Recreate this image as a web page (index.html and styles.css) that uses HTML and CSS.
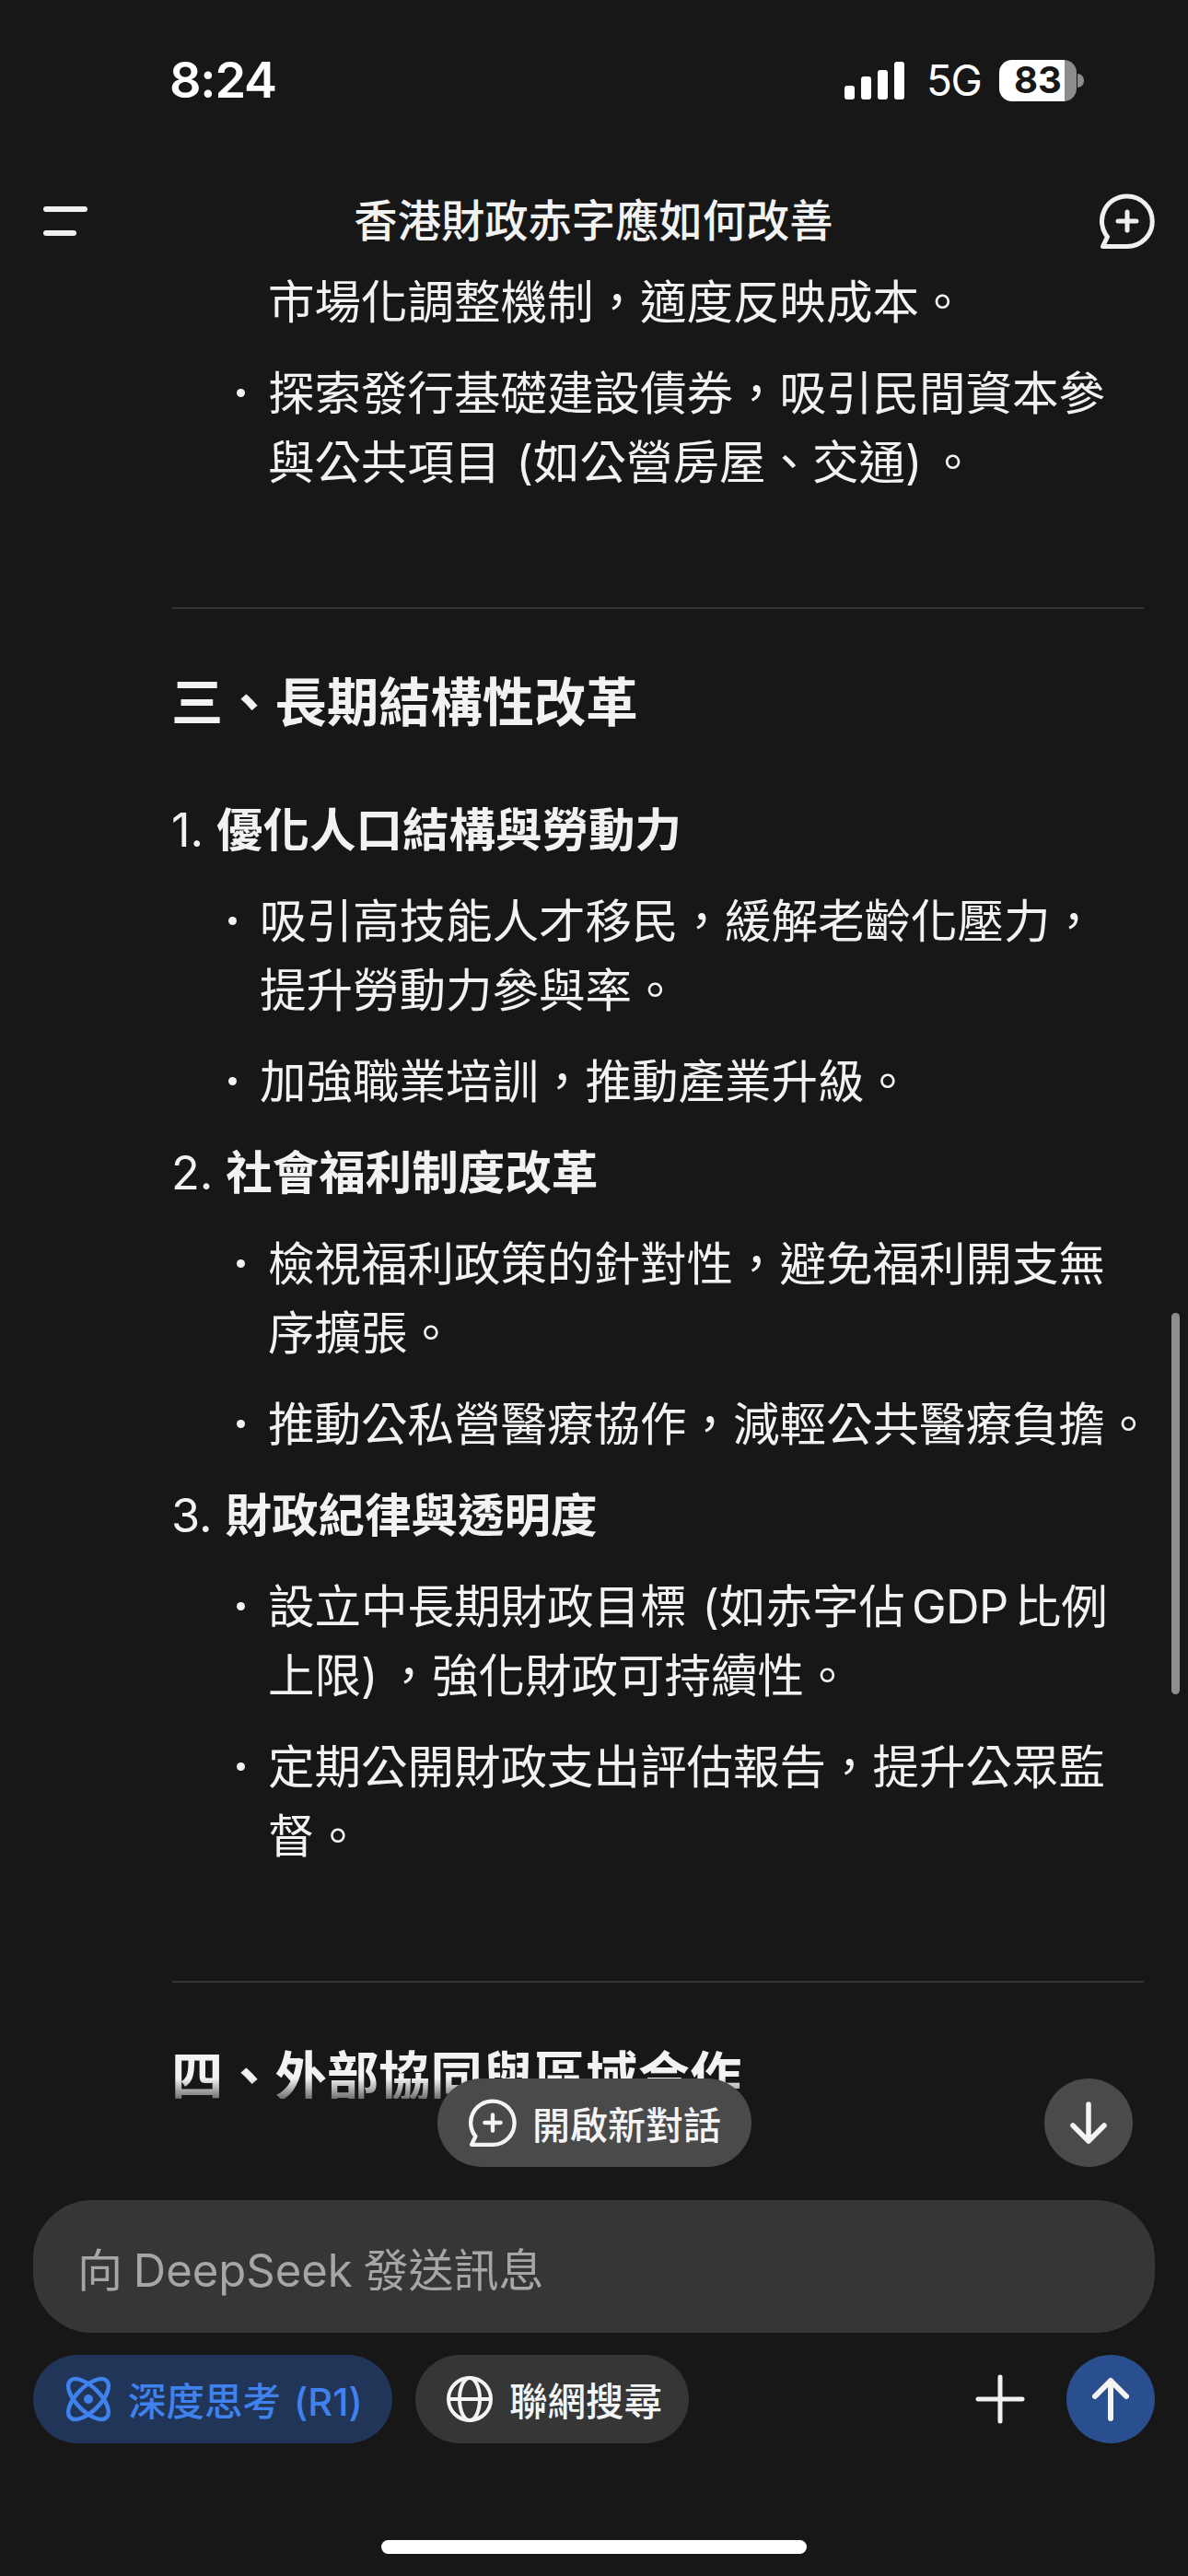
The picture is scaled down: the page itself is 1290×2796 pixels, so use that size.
FILE: index.html
```html
<!DOCTYPE html>
<html lang="zh-Hant">
<head>
<meta charset="utf-8">
<title>香港財政赤字應如何改善</title>
<link rel="stylesheet" href="styles.css">
</head>
<body>
<div class="app">
  <div class="status">
    <span class="time">8:24</span>
    <div class="status-right">
      <div class="signal"><i class="b1"></i><i class="b2"></i><i class="b3"></i><i class="b4"></i></div>
      <span class="net">5G</span>
      <div class="battery"><div class="cell"><span class="level">83</span></div><i class="nub"></i></div>
    </div>
  </div>

  <header class="nav">
    <div class="menu"><i class="m1"></i><i class="m2"></i></div>
    <h1 class="title">香港財政赤字應如何改善</h1>
    <svg class="new-icon" viewBox="0 0 60 60" fill="none" stroke="#f0f0f0" stroke-width="5" stroke-linecap="round" stroke-linejoin="round"><path d="M30 3a27 27 0 0 1 0 54.500H3.500L8.500 47A27 27 0 0 1 30 3Z"/><path d="M30 20v20M20 30h20"/></svg>
  </header>

  <main class="chat">
    <ul class="bul deep">
      <li>市場化調整機制，適度反映成本。</li>
      <li class="dot">探索發行基礎建設債券，吸引民間資本參<br>與公共項目<span class="op">(</span>如公營房屋、交通<span class="cp">)</span>。</li>
    </ul>
    <hr class="rule first">
    <h2 class="head">三、長期結構性改革</h2>
    <p class="num n1"><span class="idx">1.</span><b>優化人口結構與勞動力</b></p>
    <ul class="bul tight">
      <li class="dot">吸引高技能人才移民，緩解老齡化壓力，<br>提升勞動力參與率。</li>
      <li class="dot">加強職業培訓，推動產業升級。</li>
    </ul>
    <p class="num"><span class="idx">2.</span><b>社會福利制度改革</b></p>
    <ul class="bul deep">
      <li class="dot">檢視福利政策的針對性，避免福利開支無<br>序擴張。</li>
      <li class="dot">推動公私營醫療協作，減輕公共醫療負擔。</li>
    </ul>
    <p class="num"><span class="idx">3.</span><b>財政紀律與透明度</b></p>
    <ul class="bul deep">
      <li class="dot">設立中長期財政目標<span class="op">(</span>如赤字佔<span class="lat">GDP</span>比例<br>上限<span class="cp">)</span>，強化財政可持續性。</li>
      <li class="dot">定期公開財政支出評估報告，提升公眾監<br>督。</li>
    </ul>
    <hr class="rule">
    <h2 class="head">四、外部協同與區域合作</h2>
    <div class="scrollbar"></div>
  </main>

  <footer class="foot">
    <div class="float-row">
      <button class="newchat">
        <svg class="nc-icon" viewBox="0 0 60 60" fill="none" stroke="#f4f4f4" stroke-width="5" stroke-linecap="round" stroke-linejoin="round"><path d="M30 3a27 27 0 0 1 0 54.500H3.500L8.500 47A27 27 0 0 1 30 3Z"/><path d="M30 20v20M20 30h20"/></svg>
        <span>開啟新對話</span>
      </button>
      <button class="down">
        <svg viewBox="0 0 40 46" fill="none" stroke="#f4f4f4" stroke-width="5.500" stroke-linecap="round" stroke-linejoin="round"><path d="M20 3v40M3 26l17 17 17-17"/></svg>
      </button>
    </div>
    <div class="input">向 DeepSeek 發送訊息</div>
    <div class="tools">
      <button class="chip on">
        <svg class="ic" viewBox="0 0 48 48" fill="none" stroke="#3f82ee" stroke-width="4.500"><ellipse cx="24" cy="24" rx="28" ry="13" transform="rotate(45 24 24)"/><ellipse cx="24" cy="24" rx="28" ry="13" transform="rotate(-45 24 24)"/><circle cx="24" cy="24" r="5" fill="#3f82ee" stroke="none"/></svg>
        <span>深度思考 (R1)</span>
      </button>
      <button class="chip web">
        <svg class="ic globe" viewBox="0 0 50 50" fill="none" stroke="#f4f4f4" stroke-width="4"><circle cx="25" cy="25" r="23"/><ellipse cx="25" cy="25" rx="11" ry="23"/><path d="M2 25h46"/></svg>
        <span>聯網搜尋</span>
      </button>
      <span class="spacer"></span>
      <svg class="plus" viewBox="0 0 54 54" fill="none" stroke="#f0f0f0" stroke-width="5" stroke-linecap="round"><path d="M27 3v48M3 27h48"/></svg>
      <button class="send">
        <svg viewBox="0 0 40 48" fill="none" stroke="#f4f4f4" stroke-width="6" stroke-linecap="round" stroke-linejoin="round"><path d="M20 45V4M3 21L20 4l17 17"/></svg>
      </button>
    </div>
    <div class="home"></div>
  </footer>
</div>
</body>
</html>
```
FILE: styles.css
```css
* { box-sizing: border-box; }
html, body { margin: 0; padding: 0; background: #171717; }
body { font-family: "Inter", "Noto Sans CJK TC", sans-serif; color: #f2f2f2; }
button { font: inherit; color: inherit; border: 0; padding: 0; }
.app { width: 1290px; height: 2796px; display: flex; flex-direction: column; overflow: hidden; background: #171717; }

/* status bar */
.status { height: 190px; flex: none; display: flex; align-items: center; justify-content: space-between; padding: 0 113px 16px 184px; }
.time { font-size: 54px; font-weight: 600; color: #fff; line-height: 1; letter-spacing: -1.200px; }
.status-right { display: flex; align-items: center; }
.signal { display: flex; align-items: flex-end; gap: 7.200px; height: 41px; margin-right: 24px; }
.signal i { width: 10.800px; background: #fff; border-radius: 3px; display: block; }
.b1 { height: 15px; } .b2 { height: 25px; } .b3 { height: 32px; } .b4 { height: 41px; }
.net { font-size: 46px; line-height: 1; color: #fff; width: 58px; margin-right: 21px; letter-spacing: -1.500px; }
.battery { display: flex; align-items: center; }
.cell { width: 84px; height: 45px; border-radius: 14px; background: linear-gradient(90deg, #fff 71px, #8c8c8c 71px); display: flex; align-items: center; padding-left: 16px; }
.level { font-size: 40px; font-weight: 700; color: #171717; line-height: 1; width: 52px; }
.nub { width: 7px; height: 15px; margin-left: 1px; background: #8c8c8c; border-radius: 0 8px 8px 0; display: block; }

/* nav */
.nav { height: 100px; flex: none; position: relative; display: flex; align-items: center; justify-content: space-between; padding: 0 36px 0 47px; }
.menu { width: 48px; display: flex; flex-direction: column; gap: 20px; }
.menu i { display: block; height: 6px; border-radius: 3px; background: #f0f0f0; }
.m1 { width: 48px; } .m2 { width: 36px; }
.title { margin: 0; font-size: 47.300px; font-weight: 500; line-height: 60px; color: #f2f2f2; }
.new-icon { width: 60px; height: 60px; }

/* chat */
.chat { flex: 1; min-height: 0; position: relative; overflow: hidden; padding: 0 48px 0 186px; font-size: 50.500px; line-height: 75px; }
.chat::after { content: ""; position: absolute; left: 0; right: 0; bottom: 0; height: 22px; background: linear-gradient(rgba(23,23,23,0), rgba(23,23,23,.6)); }
.bul { list-style: none; margin: 0; padding: 0 0 0 105px; white-space: nowrap; }
.bul.tight { padding-left: 96px; }
.bul li { position: relative; margin-bottom: 24px; }
.bul li:last-child { margin-bottom: 0; }
.dot::before { content: ""; position: absolute; left: -34px; top: 33px; width: 9px; height: 9px; border-radius: 50%; background: #f2f2f2; }
.op { margin-left: 17px; }
.cp { padding-right: 8px; }
.lat { margin: 0 7px; letter-spacing: -.5px; }
.rule { border: 0; height: 2px; background: #353535; margin: 120px 0 60px 1px; }
.head { margin: 0 0 58px; font-size: 56.300px; line-height: 84px; font-weight: 700; }
.num { margin: 24px 0; white-space: nowrap; }
.num.n1 { margin-top: 0; }
.idx { margin-right: 14px; }
.num b { font-weight: 700; }
.scrollbar { position: absolute; left: 1272px; top: 1135px; width: 9px; height: 414px; border-radius: 5px; background: #8e8e8e; }

/* footer */
.foot { flex: none; height: 518px; position: relative; padding: 110px 36px 0; }
.float-row { position: absolute; left: 0; right: 0; top: -22px; height: 96px; }
.newchat { position: absolute; left: 475px; top: 0; width: 341px; height: 96px; border-radius: 48px; background: #4a4a4a; display: flex; align-items: center; padding-left: 34px; gap: 17px; font-size: 41px; font-weight: 500; color: #f4f4f4; }
.nc-icon { width: 52px; height: 52px; }
.down { position: absolute; left: 1134px; top: 0; width: 96px; height: 96px; border-radius: 50%; background: #4a4a4a; display: flex; align-items: center; justify-content: center; }
.down svg { width: 40px; height: 46px; }
.input { height: 144px; border-radius: 64px; background: #363636; display: flex; align-items: center; padding-left: 48px; font-size: 49px; word-spacing: -2px; color: #a6a6a6; }
.tools { display: flex; align-items: center; margin-top: 24px; height: 96px; }
.chip { height: 96px; border-radius: 48px; background: #363636; display: flex; align-items: center; font-size: 41.500px; font-weight: 500; color: #f4f4f4; flex: none; }
.chip.on { width: 390px; background: #213558; color: #3f82ee; padding-left: 36px; gap: 19px; margin-right: 25px; word-spacing: 3px; }
.chip.web { width: 297px; padding-left: 34px; gap: 18px; }
.ic { width: 48px; height: 48px; overflow: visible; }
.globe { width: 50px; height: 50px; }
.spacer { flex: 1; }
.plus { width: 54px; height: 54px; margin-right: 45px; }
.send { width: 96px; height: 96px; border-radius: 50%; background: #2a4f8e; display: flex; align-items: center; justify-content: center; }
.send svg { width: 40px; height: 48px; }
.home { width: 462px; height: 15px; border-radius: 8px; background: #fff; margin: 105px auto 0; }
```
